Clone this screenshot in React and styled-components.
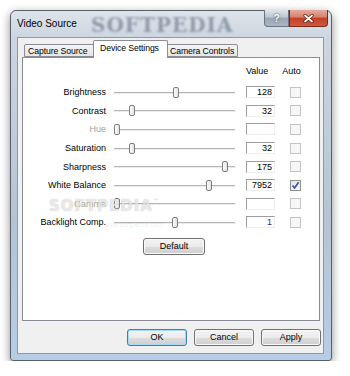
import React from 'react';
import styled, { createGlobalStyle } from "styled-components";

const GlobalStyle = createGlobalStyle`
  body{
    margin: 0;
    background: #ffffff;
    font-family: "Liberation Sans", Arial, sans-serif;
  }
`

const Window = styled.div`
  margin: 10px 0 0 10px;
  width: 322px;
  height: 351px;
  box-sizing: border-box;
  border: 1px solid #59606b;
  border-radius: 6px 6px 3px 3px;
  background: linear-gradient(to bottom, #dde3ea 0, #cdd6e0 26px, #b3c4d6 60%, #b6cde6 100%);
  box-shadow: 0 3px 10px rgba(0,0,0,0.45);
  display: flex;
  flex-direction: column;
  padding: 0 7px 6px 6px;
`

const TitleBar = styled.div`
  position: relative;
  height: 26px;
  display: flex;
  justify-content: space-between;
  align-items: flex-start;
  margin-right: -4px;
`

const Title = styled.div`
  padding-top: 7px;
  font-size: 10px;
  line-height: 12px;
  color: #000;
  position: relative;
  z-index: 1;
`

const TitleMark = styled.div`
  position: absolute;
  left: 74px;
  top: 2px;
  font-family: "DejaVu Serif", serif;
  font-weight: bold;
  font-size: 20px;
  letter-spacing: 1px;
  color: rgba(50, 66, 88, 0.42);
  filter: blur(0.8px);
  pointer-events: none;
`

const CaptionButtons = styled.div`
  display: flex;
  margin-top: -1px;
`

const CaptionBtn = styled.div`
  width: ${p => p.$w}px;
  height: 17px;
  box-sizing: border-box;
  border: 1px solid ${p => p.$close ? '#7a2a22' : '#6b7480'};
  border-top: none;
  border-radius: ${p => p.$close ? '0 0 4px 0' : '0 0 0 4px'};
  background: ${p => p.$close
    ? 'linear-gradient(to bottom, #e8aa9e 0, #d6806c 45%, #c2402a 50%, #d2583a 100%)'
    : 'linear-gradient(to bottom, #dfe5ec 0, #bcc6d1 45%, #9aa6b3 50%, #aab6c2 100%)'};
  display: flex;
  align-items: center;
  justify-content: center;
  color: #fff;
  font-weight: bold;
  font-size: 10px;
  text-shadow: 0 0 2px #333;
`

const Client = styled.div`
  flex: 1;
  background: #f0f0f0;
  border: 1px solid #8c9bac;
  display: flex;
  flex-direction: column;
  padding: 2px 3px 0 4px;
`

const TabStrip = styled.div`
  display: flex;
  align-items: flex-end;
  height: 17px;
  padding-left: 2px;
`

const Tab = styled.div`
  position: relative;
  box-sizing: border-box;
  width: ${p => p.$w}px;
  height: ${p => p.$active ? 18 : 13}px;
  margin: ${p => p.$active ? '0 -2px -1px -2px' : '0'};
  z-index: ${p => p.$active ? 2 : 1};
  border: 1px solid #898c95;
  border-bottom: ${p => p.$active ? 'none' : '1px solid #898c95'};
  border-radius: 2px 2px 0 0;
  background: ${p => p.$active ? '#ffffff' : 'linear-gradient(to bottom, #f4f4f4, #e6e6e6)'};
  font-size: 8.7px;
  letter-spacing: -0.1px;
  line-height: ${p => p.$active ? 14 : 12}px;
  padding-left: ${p => p.$active ? 6 : 3}px;
  color: #000;
  white-space: nowrap;
  overflow: hidden;
`

const Panel = styled.div`
  position: relative;
  height: 264px;
  box-sizing: border-box;
  border: 1px solid #898c95;
  background: #ffffff;
  display: flex;
  flex-direction: column;
`

const Header = styled.div`
  display: flex;
  height: 12px;
  margin-top: 7px;
  font-size: 9px;
  line-height: 12px;
  padding-left: 223px;
  span + span{ margin-left: 14px; }
`

const Rows = styled.div`
  margin-top: 6px;
  display: flex;
  flex-direction: column;
`

const Row = styled.div`
  display: flex;
  align-items: center;
  height: 18.6px;
  font-size: 9px;
`

const Label = styled.div`
  width: 83px;
  text-align: right;
  color: ${p => p.$disabled ? '#a0a0a0' : '#000'};
  white-space: nowrap;
`

const Slider = styled.div`
  position: relative;
  width: 121px;
  height: 11px;
  margin-left: 8px;
`

const Track = styled.div`
  position: absolute;
  left: 0;
  right: 0;
  top: 5px;
  height: 1px;
  background: #b4b4b4;
  border-bottom: 1px solid #ececec;
`

const Thumb = styled.div`
  position: absolute;
  top: 0;
  width: 6px;
  height: 11px;
  box-sizing: border-box;
  border: 1px solid #7d7d7d;
  border-radius: 2px;
  background: linear-gradient(to right, #fdfdfd, #e2e2e2);
`

const ValueBox = styled.div`
  width: 29px;
  height: 12px;
  box-sizing: border-box;
  margin-left: 11px;
  border-top: 1px solid #9c9c9c;
  border-left: 1px solid #9c9c9c;
  border-right: 1px solid #eeeeee;
  border-bottom: 1px solid #eeeeee;
  text-align: right;
  padding-right: 2px;
  line-height: 11px;
  color: ${p => p.$tint || '#000'};
`

const Check = styled.div`
  width: 11px;
  height: 11px;
  box-sizing: border-box;
  margin-left: 15px;
  border: 1px solid ${p => p.$checked ? '#8f8f8f' : '#c4c4c4'};
  background: ${p => p.$checked ? 'linear-gradient(135deg, #e4e4e4, #f7f7f7)' : '#f6f6f6'};
  display: flex;
  align-items: center;
  justify-content: center;
`

const Button = styled.div`
  width: ${p => p.$w || 60}px;
  height: 17px;
  box-sizing: border-box;
  border: 1px solid ${p => p.$primary ? '#3c7fb1' : '#707070'};
  border-radius: 3px;
  background: linear-gradient(to bottom, #f3f3f3 0, #ebebeb 50%, #dddddd 50%, #cfcfcf 100%);
  box-shadow: ${p => p.$primary ? 'inset 0 0 0 1px #a8dcf5' : 'inset 0 0 0 1px #fafafa'};
  font-size: 9px;
  line-height: 15px;
  text-align: center;
  color: #000;
`

const DefaultWrap = styled.div`
  margin: 6px 0 0 120px;
`

const ButtonRow = styled.div`
  display: flex;
  justify-content: flex-end;
  gap: 7px;
  margin: 8px -1px 0 0;
`

const PanelMark = styled.div`
  position: absolute;
  left: 26px;
  top: 139px;
  font-family: "DejaVu Sans", sans-serif;
  font-weight: bold;
  font-size: 15px;
  letter-spacing: 1px;
  color: rgba(255,255,255,0.7);
  text-shadow: 0 0 1px rgba(0,0,0,0.3);
  pointer-events: none;
  sup{ font-size: 6px; vertical-align: top; }
`

const SiteMark = styled.div`
  position: absolute;
  left: 80px;
  top: 163px;
  font-size: 7px;
  color: rgba(0,0,0,0.1);
  pointer-events: none;
`

const settings = [
    { name: 'Brightness', pos: 59, value: '128' },
    { name: 'Contrast', pos: 15, value: '32' },
    { name: 'Hue', pos: 0, value: '', disabled: true },
    { name: 'Saturation', pos: 15, value: '32' },
    { name: 'Sharpness', pos: 108, value: '175' },
    { name: 'White Balance', pos: 92, value: '7952', auto: true },
    { name: 'Gamma', pos: 0, value: '', disabled: true },
    { name: 'Backlight Comp.', pos: 58, value: '1', tint: '#3a1f8a' },
]

function CloseGlyph() {
    return (
        <svg width="11" height="9" viewBox="0 0 11 9">
            <path d="M2 1.5 L9 7.5 M9 1.5 L2 7.5" stroke="#5a1a10" strokeWidth="3.2" strokeLinecap="round"/>
            <path d="M2 1.5 L9 7.5 M9 1.5 L2 7.5" stroke="#ffffff" strokeWidth="1.8" strokeLinecap="round"/>
        </svg>
    )
}

function CheckGlyph() {
    return (
        <svg width="9" height="9" viewBox="0 0 9 9">
            <path d="M1.5 4.5 L3.6 7 L7.6 1.2" fill="none" stroke="#2f4fae" strokeWidth="1.6"/>
        </svg>
    )
}

function App() {
    return (
        <>
            <GlobalStyle/>
            <Window>
                <TitleBar>
                    <TitleMark>SOFTPEDIA</TitleMark>
                    <Title>Video Source</Title>
                    <CaptionButtons>
                        <CaptionBtn $w={25}>?</CaptionBtn>
                        <CaptionBtn $w={39} $close><CloseGlyph/></CaptionBtn>
                    </CaptionButtons>
                </TitleBar>
                <Client>
                    <TabStrip>
                        <Tab $w={71}>Capture Source</Tab>
                        <Tab $w={75} $active>Device Settings</Tab>
                        <Tab $w={72}>Camera Controls</Tab>
                    </TabStrip>
                    <Panel>
                        <Header><span>Value</span><span>Auto</span></Header>
                        <Rows>
                            {settings.map(s => (
                                <Row key={s.name}>
                                    <Label $disabled={s.disabled}>{s.name}</Label>
                                    <Slider>
                                        <Track/>
                                        <Thumb style={{left: s.pos}}/>
                                    </Slider>
                                    <ValueBox $tint={s.tint}>{s.value}</ValueBox>
                                    <Check $checked={s.auto}>{s.auto && <CheckGlyph/>}</Check>
                                </Row>
                            ))}
                        </Rows>
                        <DefaultWrap><Button $w={62}>Default</Button></DefaultWrap>
                        <PanelMark>SOFTPEDIA<sup>™</sup></PanelMark>
                        <SiteMark>www.softpedia.com</SiteMark>
                    </Panel>
                    <ButtonRow>
                        <Button $primary>OK</Button>
                        <Button>Cancel</Button>
                        <Button>Apply</Button>
                    </ButtonRow>
                </Client>
            </Window>
        </>
    );
}

export default App;
